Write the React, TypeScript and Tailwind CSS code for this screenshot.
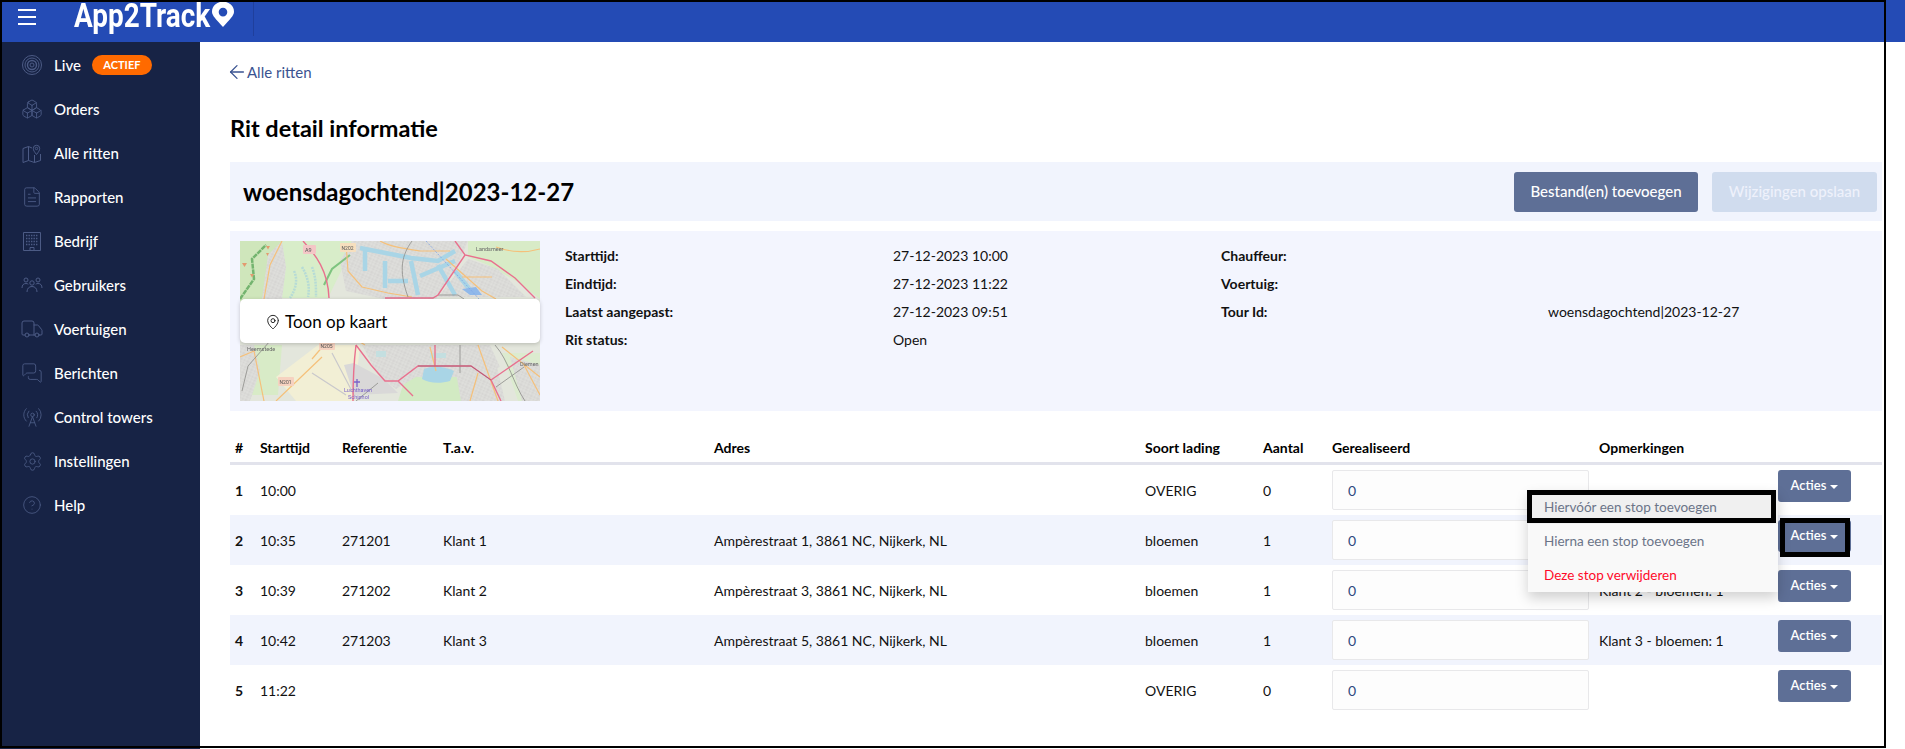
import { ArrowLeft, Boxes, CircleHelp, FileText, MapPin, MessagesSquare, RadioTower, Settings, Truck } from "lucide-react";
import type { ReactNode } from "react";

function LiveIcon() {
  return (
    <svg width="22" height="22" viewBox="0 0 22 22" fill="none" stroke="currentColor" strokeWidth="1">
      <circle cx="11" cy="11" r="9.5" />
      <circle cx="11" cy="11" r="7" />
      <circle cx="11" cy="11" r="4.5" strokeWidth="1.4" />
      <circle cx="11" cy="11" r="2" />
    </svg>
  );
}

function RouteMapIcon() {
  return (
    <svg width="20" height="20" viewBox="0 0 20 20" fill="none" stroke="currentColor" strokeWidth="1">
      <path d="M1 5.5 6.5 3.5 10 5M6.5 3.5v14M1 5.5v14l5.5-2 6 2 6-2V11M12.5 19.5V12" />
      <path d="M14.5 11.5c-2-2.5-3.2-4.2-3.2-6a3.2 3.2 0 0 1 6.4 0c0 1.800-1.200 3.500-3.200 6Z" />
      <circle cx="14.500" cy="5.500" r="1.200" />
    </svg>
  );
}

function BuildingIcon() {
  return (
    <svg width="20" height="20" viewBox="0 0 20 20" fill="none" stroke="currentColor" strokeWidth="1">
      <path d="M1.500 1.500h17v18h-17zM8 19.500v-3h4v3" />
      <path
        strokeWidth="1.400"
        strokeDasharray="1.400 1.100"
        d="M4 4.500h12M4 7.500h12M4 10.500h12M4 13.500h12"
      />
    </svg>
  );
}

function PeopleIcon() {
  return (
    <svg width="22" height="20" viewBox="0 0 22 20" fill="none" stroke="currentColor" strokeWidth="1">
      <circle cx="5" cy="5" r="2" />
      <circle cx="17" cy="5" r="2" />
      <circle cx="11" cy="8" r="2.200" />
      <path d="M1 13c0-3 1.500-4.500 4-4.500 1 0 1.700.3 2.300.7M21 13c0-3-1.500-4.500-4-4.500-1 0-1.700.3-2.300.7M6 17c0-3.500 2-5.500 5-5.500s5 2 5 5.500" />
    </svg>
  );
}

const navItems: { label: string; icon: ReactNode }[] = [
  { label: "Live", icon: <LiveIcon /> },
  { label: "Orders", icon: <Boxes size={22} strokeWidth={1} /> },
  { label: "Alle ritten", icon: <RouteMapIcon /> },
  { label: "Rapporten", icon: <FileText size={22} strokeWidth={1} /> },
  { label: "Bedrijf", icon: <BuildingIcon /> },
  { label: "Gebruikers", icon: <PeopleIcon /> },
  { label: "Voertuigen", icon: <Truck size={24} strokeWidth={1} /> },
  { label: "Berichten", icon: <MessagesSquare size={22} strokeWidth={1} /> },
  { label: "Control towers", icon: <RadioTower size={21} strokeWidth={1} /> },
  { label: "Instellingen", icon: <Settings size={21} strokeWidth={1} /> },
  { label: "Help", icon: <CircleHelp size={20} strokeWidth={1} /> },
];

const stops = [
  { nr: 1, time: "10:00", ref: "", tav: "", adres: "", lading: "OVERIG", aantal: 0, opm: "" },
  { nr: 2, time: "10:35", ref: "271201", tav: "Klant 1", adres: "Ampèrestraat 1, 3861 NC, Nijkerk, NL", lading: "bloemen", aantal: 1, opm: "Klant 1 - bloemen: 1" },
  { nr: 3, time: "10:39", ref: "271202", tav: "Klant 2", adres: "Ampèrestraat 3, 3861 NC, Nijkerk, NL", lading: "bloemen", aantal: 1, opm: "Klant 2 - bloemen: 1" },
  { nr: 4, time: "10:42", ref: "271203", tav: "Klant 3", adres: "Ampèrestraat 5, 3861 NC, Nijkerk, NL", lading: "bloemen", aantal: 1, opm: "Klant 3 - bloemen: 1" },
  { nr: 5, time: "11:22", ref: "", tav: "", adres: "", lading: "OVERIG", aantal: 0, opm: "" },
];

const headers = ["#", "Starttijd", "Referentie", "T.a.v.", "Adres", "Soort lading", "Aantal", "Gerealiseerd", "Opmerkingen", ""];

const gridCols = "grid grid-cols-[25px_82px_101px_271px_431px_118px_69px_267px_179px_1fr] items-center";

function MapPreview() {
  return (
    <svg viewBox="0 0 300 160" width="300" height="160" className="block blur-[0.5px]">
      <defs>
        <pattern id="streets" width="7" height="6" patternUnits="userSpaceOnUse" patternTransform="rotate(24)">
          <rect width="7" height="6" fill="#d6d5d3" />
          <path d="M0 0h7M0 3h7M2 0v6M5 0v6" stroke="#e6e5e2" strokeWidth="0.600" />
        </pattern>
      </defs>
      <rect width="300" height="160" fill="#e3e6dc" />
      {/* groen */}
      <path d="M0 0h42L28 22 22 60H0Z" fill="#cfe6bb" />
      <path d="M42 0h70l-8 24-16 33H40l-6-18Z" fill="#d8edc9" />
      <path d="M228 0h72v58l-24-18-28-16-20-8Z" fill="#d8ebc7" />
      <path d="M0 104h42l-4 50H0Z" fill="#d8ebc7" />
      <path d="M168 128h50l6 32h-66Z" fill="#d2eac3" />
      <path d="M262 112h38v48h-22Z" fill="#dcebcf" />
      {/* bebouwing */}
      <path d="M28 14 42 0l4 26-4 32H22Z" fill="url(#streets)" />
      <path d="M112 0h116l-10 24-22 34h-52l-38-8-6-30Z" fill="url(#streets)" />
      <path d="M228 18l30 10 28 28h-88Z" fill="url(#streets)" />
      <path d="M122 104h128l10 22-40 10h-44l-20 12-18-14Z" fill="url(#streets)" />
      <path d="M215 126h42l8 34h-44Z" fill="url(#streets)" />
      <path d="M0 104h14l6 26-10 30H0Z" fill="url(#streets)" />
      <path d="M270 116l30 8v36h-18Z" fill="url(#streets)" />
      {/* Schiphol */}
      <path d="M36 136 78 104h42l-6 56H56Z" fill="#f2efd5" />
      <path d="M104 124l10 30 44-2-14-14-30-16Z" fill="#d9d8d8" />
      <path d="M92 112l22 42M72 132l34 22" stroke="#c9c8cc" strokeWidth="1.200" fill="none" />
      {/* water */}
      <path
        d="M120 7l51 10 27 3 17-10M125 10v20M145 20v27M148 40h20M171 20l7 34M198 24l17 30M215 30l16 20M180 35l35-15"
        stroke="#a9d5e6"
        strokeWidth="4.500"
        fill="none"
      />
      <path d="M54 30c4 8 2 18-4 27M62 26c6 10 8 20 6 30M72 26c4 10 4 20 4 30" stroke="#b6dbd6" strokeWidth="2.500" strokeDasharray="2 1" fill="none" />
      <path d="M184 128c10-4 22-2 30 2l-4 10c-10 3-22 2-28-2Z" fill="#a9d5e6" />
      <path d="M136 110h10v6h-10ZM190 112h16v5h-16Z" fill="#c4dfe0" />
      <path d="M222 48l8 6h12l-6-8Z" fill="#8fb8ea" />
      {/* wegen */}
      <path d="M0 58 14 38 12 18 26 4" stroke="#74b46f" strokeWidth="2.500" fill="none" strokeDasharray="5 0.800" />
      <path d="M84 44 92 28 110 14" stroke="#7ec47f" strokeWidth="2" fill="none" />
      <path d="M2 22h5l-2.500 4ZM26 5h4l-2 3.500ZM10 33h4l-2 3.500ZM26 12h3l-1.500 3Z" fill="#e39a6f" />
      <path
        d="M42 0 30 24 24 58M106 2l2 28 14 16 26 6 24 4M140 0c10 6 26 8 40 10h30M206 18l36 32 14 8M72 118l12-14M36 160l46-44M0 116l14-6 10 50M262 106l38 30M238 104l20 56M284 124l16 30M222 36h30M190 106l6 24M125 104l-20-12M238 132l-8 28M256 6c16 6 30 6 44 2"
        stroke="#f5c07a"
        strokeWidth="1.200"
        fill="none"
      />
      <path
        d="M172 0c-10 14-14 28-4 56M198 54h20l6 4M255 104c14 16 18 38 30 56M220 104v28M30 100 8 125l-6 25M138 142l-22 18M256 146l28-20"
        stroke="#8b8b88"
        strokeWidth="0.800"
        fill="none"
      />
      <path d="M186 0 250 70" stroke="#7fa3e6" strokeWidth="0.800" strokeDasharray="2 1.500" fill="none" />
      <path
        d="M63 0C76 14 88 30 89 57M215 0l10 14 26 6 24 17 20 20M225 14l-27 40-5 3h-48"
        stroke="#e9708e"
        strokeWidth="1.400"
        fill="none"
      />
      <path
        d="M116 104c-2 16-3 38-3 56M116 104l15 20 14 16h13l20-15h53l20 14 42-29M158 140l15 15M195 104v21M251 139l10 21"
        stroke="#e9708e"
        strokeWidth="1.400"
        fill="none"
      />
      <path d="M178 125h53l20 14" stroke="#a35a72" strokeWidth="0.800" fill="none" />
      <rect x="63" y="4" width="13" height="9" rx="1" fill="#f4c6c6" />
      <text x="65" y="11" fontSize="5.500" fill="#555" fontFamily="Roboto, sans-serif">A9</text>
      <rect x="100" y="2" width="16" height="9" rx="1" fill="#f6dfbe" />
      <text x="101.500" y="9" fontSize="5" fill="#555" fontFamily="Roboto, sans-serif">N202</text>
      <rect x="79" y="100" width="16" height="9" rx="1" fill="#f6d2c0" />
      <text x="80.500" y="107" fontSize="5" fill="#555" fontFamily="Roboto, sans-serif">N205</text>
      <rect x="38" y="136" width="16" height="9" rx="1" fill="#f6d2c0" />
      <text x="39.500" y="143" fontSize="5" fill="#555" fontFamily="Roboto, sans-serif">N201</text>
      <text x="236" y="10" fontSize="5.500" fill="#666" fontFamily="Roboto, sans-serif">Landsmeer</text>
      <text x="7" y="110" fontSize="5.500" fill="#666" fontFamily="Roboto, sans-serif">Heemstede</text>
      <text x="280" y="125" fontSize="5.500" fill="#666" fontFamily="Roboto, sans-serif">Diemen</text>
      <text x="104" y="151" fontSize="5.500" fill="#7a62c9" fontFamily="Roboto, sans-serif">Luchthaven</text>
      <text x="108" y="158" fontSize="5.500" fill="#7a62c9" fontFamily="Roboto, sans-serif">Schiphol</text>
      <path d="M117 138v8M114 141h6" stroke="#7a62c9" strokeWidth="1.300" />
    </svg>
  );
}

function ActionsButton() {
  return (
    <button className="flex h-8 w-[73px] items-center justify-center gap-1 rounded-[3px] bg-[#5e6f96] text-[13px] font-semibold text-white">
      Acties
      <span className="mt-0.5 h-0 w-0 border-x-4 border-t-4 border-x-transparent border-t-white" />
    </button>
  );
}

export default function App() {
  return (
    <div className="relative h-[749px] w-full overflow-hidden bg-white font-['Lato',sans-serif] text-[14px] text-[#111]">
      <header className="flex h-[42px] items-stretch bg-[#244bb5]">
        <div className="flex w-[74px] flex-col gap-[5px] pl-[18px] pt-[9px]">
          <span className="h-[2px] w-[18px] bg-white" />
          <span className="h-[2px] w-[18px] bg-white" />
          <span className="h-[2px] w-[18px] bg-white" />
        </div>
        <div className="flex h-[36px] w-[180px] items-start gap-[2px] border-r border-[#1f3f9c]">
          <span className="inline-block w-[136px] origin-left scale-x-[0.845] whitespace-nowrap font-['Roboto',sans-serif] text-[33px] font-bold leading-[32px] text-white">
            App2Track
          </span>
          <svg width="22" height="25" viewBox="0 0 23 26" className="mt-[2px]">
            <path
              fillRule="evenodd"
              fill="#fff"
              d="M11.500 26C4 17.500 0 14 0 10a11 10 0 0 1 23 0c0 4-4 7.500-11.500 16Zm0-20a4.500 4.500 0 1 0 0 9 4.500 4.500 0 0 0 0-9Z"
            />
          </svg>
        </div>
      </header>

      <div className="flex h-[707px]">
        <nav className="w-[200px] shrink-0 bg-[#172345] pt-px">
          {navItems.map((item) => (
            <div key={item.label} className="flex h-[44px] items-center text-[15px] font-medium text-white">
              <span className="flex w-[54px] shrink-0 justify-center pl-[10px] text-[#4c5b85]">{item.icon}</span>
              {item.label}
              {item.label === "Live" && (
                <span className="ml-[11px] flex h-5 w-[60px] items-center justify-center rounded-full bg-[#ff6a00] text-[11px] font-bold">
                  ACTIEF
                </span>
              )}
            </div>
          ))}
        </nav>

        <main className="min-w-0 flex-1 pl-[30px] pr-[23px]">
          <a className="mt-[21px] flex h-[18px] items-center text-[15px] text-[#3a5391]">
            <ArrowLeft size={22} strokeWidth={1.400} className="-ml-[4px] -mr-px" />
            Alle ritten
          </a>
          <h1 className="mt-[32px] h-[30px] text-[23.5px] font-bold leading-[30px] text-black">Rit detail informatie</h1>

          <div className="mt-[19px] flex h-[59px] items-center justify-between bg-[#f1f4fd] pl-[13px] pr-[5px]">
            <h2 className="text-[24px] font-bold text-black">woensdagochtend|2023-12-27</h2>
            <div className="flex gap-[14px]">
              <button className="h-10 w-[184px] rounded-[3px] bg-[#5e6f96] text-[15px] font-medium text-white">
                Bestand(en) toevoegen
              </button>
              <button className="h-10 w-[165px] rounded-[3px] bg-[#d0dcee] text-[15px] font-medium text-[#eef1fb]">
                Wijzigingen opslaan
              </button>
            </div>
          </div>

          <section className="mt-[10px] flex h-[180px] bg-[#f3f5fe] p-[10px]">
            <div className="relative h-[160px] w-[300px] shrink-0">
              <MapPreview />
              <div className="absolute left-0 top-[58px] flex h-[44px] w-[300px] items-center gap-[4px] rounded-[5px] bg-white pl-[25px] pt-px text-[17px] text-black shadow-[0_1px_4px_rgba(0,0,0,0.2)]">
                <MapPin size={16} strokeWidth={1.250} />
                Toon op kaart
              </div>
            </div>
            <dl className="ml-[25px] grid h-[112px] flex-1 grid-cols-[328px_328px_327px_1fr] grid-rows-4 items-center">
              <dt className="font-bold">Starttijd:</dt>
              <dd>27-12-2023 10:00</dd>
              <dt className="font-bold">Chauffeur:</dt>
              <dd />
              <dt className="font-bold">Eindtijd:</dt>
              <dd>27-12-2023 11:22</dd>
              <dt className="font-bold">Voertuig:</dt>
              <dd />
              <dt className="font-bold">Laatst aangepast:</dt>
              <dd>27-12-2023 09:51</dd>
              <dt className="font-bold">Tour Id:</dt>
              <dd>woensdagochtend|2023-12-27</dd>
              <dt className="font-bold">Rit status:</dt>
              <dd>Open</dd>
            </dl>
          </section>

          <div className={`${gridCols} mt-[21px] h-[33px] border-b-[3px] border-[#e2e3ec] font-bold text-black`}>
            {headers.map((h, i) => (
              <div key={i} className="pl-[5px]">
                {h}
              </div>
            ))}
          </div>

          {stops.map((stop) => (
            <div key={stop.nr} className={`${gridCols} h-[50px] ${stop.nr % 2 === 0 ? "bg-[#f1f4fd]" : "bg-white"}`}>
              <div className="pl-[5px] font-bold">{stop.nr}</div>
              <div className="pl-[5px]">{stop.time}</div>
              <div className="pl-[5px]">{stop.ref}</div>
              <div className="pl-[5px]">{stop.tav}</div>
              <div className="pl-[5px]">{stop.adres}</div>
              <div className="pl-[5px]">{stop.lading}</div>
              <div className="pl-[5px]">{stop.aantal}</div>
              <div className="pl-[5px]">
                <input
                  defaultValue="0"
                  className="h-10 w-[257px] rounded-[2px] border border-[#e8e8ea] bg-[#fdfdfd] pl-[15px] text-[#2e4a80] outline-none"
                />
              </div>
              <div className="pl-[5px]">{stop.opm}</div>
              <div className="relative -mt-[8px] pl-[5px]">
                <ActionsButton />
                {stop.nr === 2 && (
                  <>
                    <span className="absolute left-[7px] top-[-2px] h-[39px] w-[70px] border-[5px] border-black" />
                    <div className="absolute left-[-245px] top-[-30px] z-10 h-[102px] w-[250px] bg-[#f9f9f9] text-[13.5px] text-[#6b7488] shadow-[0_6px_12px_rgba(0,0,0,0.18)]">
                      <div className="relative flex h-[34px] items-center bg-[#f0f0f0] pl-[16px]">
                        Hiervóór een stop toevoegen
                        <span className="absolute -left-px top-0 h-[33px] w-[249px] border-[5px] border-black" />
                      </div>
                      <div className="flex h-[34px] items-center pl-[16px]">Hierna een stop toevoegen</div>
                      <div className="flex h-[34px] items-center pl-[16px] text-[#ff0a2a]">Deze stop verwijderen</div>
                    </div>
                  </>
                )}
              </div>
            </div>
          ))}
        </main>
      </div>

      {/* annotatiekader van de screenshot zelf */}
      <div className="pointer-events-none absolute left-0 top-0 z-20 h-[748px] w-[1886px] border-2 border-black" />
    </div>
  );
}
